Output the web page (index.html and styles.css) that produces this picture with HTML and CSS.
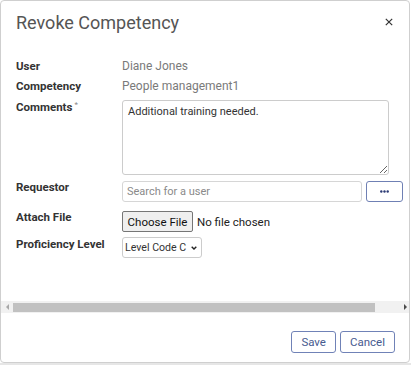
FILE: index.html
```html
<!DOCTYPE html>
<html lang="en">
<head>
<meta charset="utf-8">
<title>Revoke Competency</title>
<link rel="stylesheet" href="styles.css">
</head>
<body>
<div class="dialog">
  <div class="main">
    <div class="header">
      <h1 class="title">Revoke Competency</h1>
      <button class="close" aria-label="Close">
        <svg width="8" height="8" viewBox="0 0 8 8"><path d="M0.8 0.8 L7.2 7.2 M7.2 0.8 L0.8 7.2" stroke="#333" stroke-width="1.2" fill="none"/></svg>
      </button>
    </div>
    <div class="form">
      <div class="row r-user">
        <div class="label">User</div>
        <div class="value">Diane Jones</div>
      </div>
      <div class="row r-comp">
        <div class="label">Competency</div>
        <div class="value">People management1</div>
      </div>
      <div class="row r-comments">
        <div class="label lab-pad">Comments<sup class="req">*</sup></div>
        <textarea class="textarea">Additional training needed.</textarea>
      </div>
      <div class="row r-req">
        <div class="label">Requestor</div>
        <div class="req-ctrl">
          <input class="search" type="text" placeholder="Search for a user">
          <button class="more" aria-label="More">
            <svg width="9" height="3" viewBox="0 0 9 3"><circle cx="1.3" cy="1.5" r="1.2" fill="#2c3b75"/><circle cx="4.5" cy="1.5" r="1.2" fill="#2c3b75"/><circle cx="7.7" cy="1.5" r="1.2" fill="#2c3b75"/></svg>
          </button>
        </div>
      </div>
      <div class="row r-file">
        <div class="label">Attach File</div>
        <div class="file-ctrl">
          <button class="file-btn">Choose File</button>
          <span class="file-name">No file chosen</span>
        </div>
      </div>
      <div class="row r-prof">
        <div class="label">Proficiency Level</div>
        <div class="select-wrap">
          <select class="select"><option>Level Code C</option></select>
          <svg class="chev" width="6" height="4" viewBox="0 0 6 4"><path d="M0.7 0.7 L3 3 L5.3 0.7" stroke="#222" stroke-width="1.4" fill="none"/></svg>
        </div>
      </div>
    </div>
  </div>
  <div class="hscroll">
    <div class="arrow-btn left">
      <svg width="3" height="6" viewBox="0 0 3 6"><path d="M3 0 L0 3 L3 6 Z" fill="#a8a8a8"/></svg>
    </div>
    <div class="thumb"></div>
    <div class="track-rest"></div>
    <div class="arrow-btn right">
      <svg width="3" height="6" viewBox="0 0 3 6"><path d="M0 0 L3 3 L0 6 Z" fill="#4a4a4a"/></svg>
    </div>
  </div>
  <div class="footer">
    <button class="btn">Save</button>
    <button class="btn">Cancel</button>
  </div>
</div>
<div class="behind"></div>
</body>
</html>
```

FILE: styles.css
```css
* { box-sizing: border-box; }

html, body {
  margin: 0;
  padding: 0;
  background: #ffffff;
  overflow: hidden;
  height: 365px;
}

body {
  font-family: Roboto, "Liberation Sans", Arial, sans-serif;
  color: #333;
}

.dialog {
  width: 410px;
  height: 363px;
  border: 1px solid #cfcfcf;
  border-radius: 4px;
  background: #fff;
  display: flex;
  flex-direction: column;
}

.main {
  flex: 1;
  display: flex;
  flex-direction: column;
}

.header {
  display: flex;
  justify-content: space-between;
  align-items: flex-start;
  padding: 10px 16px 0 15px;
}

.title {
  margin: 0;
  font-size: 18px;
  line-height: 24px;
  font-weight: 400;
  color: #555;
}

.close {
  margin-top: 7px;
  padding: 0;
  border: 0;
  background: none;
  width: 8px;
  height: 8px;
  display: flex;
}

.form {
  margin-top: 23px;
  padding-left: 15px;
  display: flex;
  flex-direction: column;
}

.row {
  display: flex;
  align-items: flex-start;
}

.r-comp { margin-top: 4px; }
.r-comments { margin-top: 4px; }
.r-req { margin-top: 4px; }
.r-file { margin-top: 7px; }
.r-prof { margin-top: 4px; }

.label {
  width: 106px;
  flex: none;
  font-size: 11.5px;
  line-height: 16px;
  font-weight: 700;
  color: #333;
}

.lab-pad { padding-top: 1px; }

.req {
  font-size: 8px;
  font-weight: 400;
  color: #888;
  margin-left: 2px;
  vertical-align: 4px;
  line-height: 0;
}

.value {
  font-size: 12px;
  line-height: 16px;
  color: #7a7a7a;
}

.textarea {
  margin: 2px 0 0 0;
  width: 267px;
  height: 75px;
  border: 1px solid #cccccc;
  border-radius: 3px;
  padding: 4px 5px;
  font-family: Roboto, "Liberation Sans", Arial, sans-serif;
  font-size: 11px;
  line-height: 14px;
  color: #333;
  resize: both;
}

.req-ctrl {
  margin-top: 2px;
  display: flex;
  gap: 4px;
}

.search {
  width: 240px;
  height: 21px;
  border: 1px solid #d6d6d6;
  border-radius: 3px;
  padding: 0 4px;
  font-family: Roboto, "Liberation Sans", Arial, sans-serif;
  font-size: 11px;
  color: #333;
  margin: 0;
}

.search::placeholder { color: #8a8a8a; }

.more {
  width: 37px;
  height: 21px;
  border: 1px solid #6f80b4;
  border-radius: 3px;
  background: #fff;
  padding: 0;
  display: flex;
  align-items: center;
  justify-content: center;
}

.file-ctrl {
  margin-top: 2px;
  display: flex;
  align-items: center;
  gap: 4px;
}

.file-btn {
  height: 21px;
  width: 71px;
  padding: 0;
  border: 1px solid #767676;
  border-radius: 2px;
  background: #efefef;
  font-family: Roboto, "Liberation Sans", Arial, sans-serif;
  font-size: 11.5px;
  color: #111;
}

.file-name {
  font-size: 11.5px;
  color: #222;
}

.select-wrap {
  margin-top: 1px;
  width: 80px;
  height: 21px;
  border: 1px solid #cccccc;
  border-radius: 3px;
  background: #fff;
  display: flex;
  align-items: center;
  gap: 3px;
  padding: 0 4px 0 2px;
}

.select {
  appearance: none;
  -webkit-appearance: none;
  border: 0;
  background: transparent;
  padding: 0;
  margin: 0;
  flex: 1;
  min-width: 0;
  height: 19px;
  font-family: Roboto, "Liberation Sans", Arial, sans-serif;
  font-size: 10.6px;
  color: #333;
  outline: none;
}

.chev { flex: none; margin-top: 1px; }

.hscroll {
  height: 12px;
  flex: none;
  background: #f1f1f1;
  display: flex;
  align-items: center;
}

.arrow-btn {
  width: 12px;
  height: 12px;
  display: flex;
  align-items: center;
  flex: none;
}

.arrow-btn.left { justify-content: center; }
.arrow-btn.right { justify-content: flex-end; padding-right: 2px; }

.thumb {
  width: 362px;
  height: 9px;
  background: #c1c1c1;
  flex: none;
}

.track-rest { flex: 1; }

.footer {
  height: 49px;
  flex: none;
  display: flex;
  justify-content: flex-end;
  align-items: flex-start;
  gap: 4px;
  padding: 18px 14px 0 0;
}

.btn {
  height: 22px;
  padding: 0 9px;
  border: 1px solid #7082b7;
  border-radius: 3px;
  background: #fff;
  font-family: Roboto, "Liberation Sans", Arial, sans-serif;
  font-size: 11.5px;
  color: #475a8f;
}

.behind {
  height: 2px;
  background: #e6e6e6;
}
```
